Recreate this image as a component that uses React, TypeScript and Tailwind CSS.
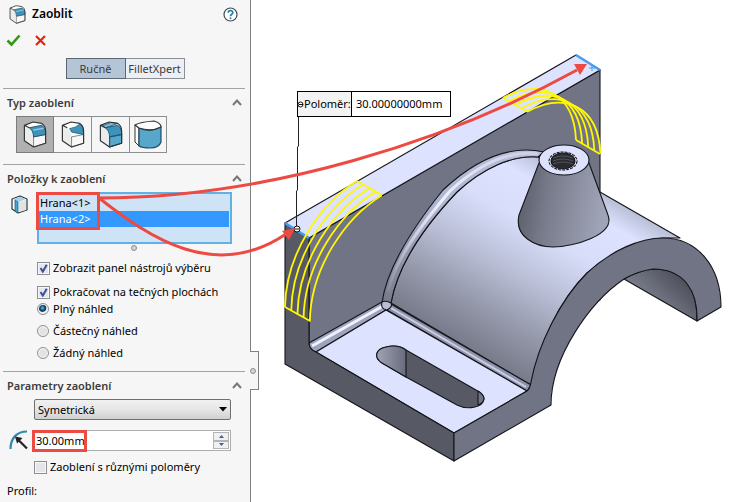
import { useState } from 'react';
import type { ReactNode } from 'react';

const edgeOutline = '#14141a';

function FilletIcon({ className = 'w-[24px] h-[27px]', kind = 'edge' }: { className?: string; kind?: string }) {
  const front = kind === 'full' ? '#58a6c9' : '#f8f8f8';
  return (
    <svg viewBox="0 0 24 28" className={className} aria-hidden="true">
      <path d="M1 4.500 L10 1 L19 2.500 Q23 5 23 10 V23 L10.500 27 L1 20.500 Z" fill="#fff" />
      <path d="M1 4.500 L6 7 Q10.500 10 10.500 16 V27 L1 20.500 Z" fill="#ececec" />
      <path d="M10.500 16.500 L23 14 V23 L10.500 27 Z" fill={front} stroke="#666" strokeWidth=".8" />
      {kind === 'full' && (
        <path d="M3 5 L12 1.500 L19 2.500 L6.500 7 Z" fill="#7dbddb" stroke="#1d5d7c" strokeWidth=".9" />
      )}
      {kind === 'variable' ? (
        <path d="M8.500 8 Q15 7 19.500 3 Q23 6 23 14 L10.500 11.500 Q10 9.500 8.500 8 Z" fill="#3f93bb" stroke="#1d5d7c" strokeWidth=".9" />
      ) : (
        <path d="M6 7 L19 4.500 Q23 7 23 11 V14 L10.500 16.500 Q10.500 10 6 7 Z" fill="#3f93bb" stroke="#1d4d66" strokeWidth=".9" />
      )}
      {kind === 'edge' && <path d="M10 9.500 L21 7.500" stroke="#8dcbe4" strokeWidth="1.4" />}
      {kind === 'full' && <path d="M10.500 16.500 L23 14 V23 L10.500 27 Z" fill="none" stroke="#1d5d7c" strokeWidth="1.2" />}
      <path d="M19 2.500 L10 1 L1 4.500 V20.500 L10.500 27 L23 23 V10 Q23 5 19 2.500 M1 4.500 L6 7" fill="none" stroke="#333" strokeWidth="1.2" strokeLinejoin="round" />
    </svg>
  );
}

function FullRoundIcon() {
  return (
    <svg viewBox="0 0 28 30" className="w-[28px] h-[30px]" aria-hidden="true">
      <path d="M1 5 L5 8 V26 L1 22 Z" fill="#fff" stroke="#333" />
      <path d="M5 8 Q16 13 27 7 V22 Q25 28 16 28 Q8 28 5 26 Z" fill="#58a6c9" stroke="#1d4d66" strokeWidth="1.2" />
      <path d="M1 5 Q6 2 20 1 Q27 3 27 7 Q17 12 5 8 Z" fill="#fff" stroke="#333" strokeWidth="1.2" />
    </svg>
  );
}

function FaceIcon() {
  return (
    <svg viewBox="0 0 17 19" className="w-[17px] h-[19px]" aria-hidden="true">
      <path d="M1 4 L9 1 L16 4 V15 L7 18 L1 14 Z" fill="#fff" stroke="#333" strokeWidth="1.2" strokeLinejoin="round" />
      <path d="M2 4 L9 2 L15 4 L8 7 Z" fill="#9fd3ea" />
      <path d="M8 7 L15 5 V15 L8 17 Z" fill="#e2e2e2" />
      <path d="M4 5 L7 7 V18 L4 16 Z" fill="#45a5d0" stroke="#1b6689" strokeWidth=".8" />
    </svg>
  );
}

function Section({ title, children }: { title: string; children: ReactNode }) {
  const [open, setOpen] = useState(true);
  return (
    <section className="ml-[3px] mr-[5px] border-t border-[#a3a3a3]">
      <h2>
        <button
          type="button"
          aria-expanded={open}
          onClick={() => setOpen(!open)}
          className="flex h-[27px] w-full items-center justify-between pl-1 pr-[3px] font-semibold text-[#3c3c3c]"
        >
          {title}
          <svg viewBox="0 0 10 7" className={open ? 'h-[7px] w-[10px]' : 'h-[7px] w-[10px] rotate-180'} aria-hidden="true">
            <path d="M1 6 L5 1.500 L9 6" fill="none" stroke="#777" strokeWidth="2" />
          </svg>
        </button>
      </h2>
      {open && children}
    </section>
  );
}

function Check({ label, checked = false }: { label: string; checked?: boolean }) {
  return (
    <label className="flex h-5 items-center gap-[3px]">
      <span className="grid size-[13px]">
        <input
          type="checkbox"
          defaultChecked={checked}
          className="peer size-[13px] appearance-none border border-[#8e8f8f] bg-[#e4e6ea] shadow-[inset_0_0_0_1px_#f8f8f8] [grid-area:1/1]"
        />
        <svg viewBox="0 0 13 13" className="invisible size-[13px] peer-checked:visible [grid-area:1/1] pointer-events-none" aria-hidden="true">
          <path d="M3.500 6 L5.800 9.500 L9.800 2.800" fill="none" stroke="#3b4f9c" strokeWidth="2" />
        </svg>
      </span>
      {label}
    </label>
  );
}

function Radio({ label, checked = false }: { label: string; checked?: boolean }) {
  return (
    <label className="flex h-[14px] items-center gap-1">
      <input
        type="radio"
        name="preview"
        defaultChecked={checked}
        className="size-3 appearance-none rounded-full border border-[#8e8f8f] bg-[#e3e3e3] shadow-[inset_0_0_0_1px_#f8f8f8] checked:bg-[radial-gradient(circle_at_45%_40%,#62c4ee_0,#135582_28%,#0c3552_42%,#eeeeee_52%)]"
      />
      {label}
    </label>
  );
}

function PropertyPanel() {
  return (
    <aside className="relative w-[251px] shrink-0 border-r border-[#808080] bg-[#f6f6f6]">
      <header className="flex h-7 items-center gap-[5px] pl-2 pr-3 text-[12px] font-semibold text-black">
        <FilletIcon className="h-[19px] w-[19px]" />
        <h1>Zaoblit</h1>
        <button type="button" aria-label="Nápověda" className="ml-auto">
          <svg viewBox="0 0 15 15" className="size-[15px]" aria-hidden="true">
            <circle cx="7.500" cy="7.500" r="6.500" fill="#fff" stroke="#3f4a52" strokeWidth="1.2" />
            <path d="M5.200 5.800 C5.200 2.800 10 2.900 9.800 5.600 C9.700 7.300 7.500 7.300 7.500 9.200" fill="none" stroke="#2980ad" strokeWidth="1.7" />
            <circle cx="7.500" cy="11.300" r="1" fill="#2980ad" />
          </svg>
        </button>
      </header>

      <div className="flex h-6 items-center gap-[14px] pl-[6px]">
        <button type="button" aria-label="OK">
          <svg viewBox="0 0 15 13" className="h-[13px] w-[15px]" aria-hidden="true">
            <path d="M1.500 6.500 L5.500 10.500 L13.500 1.500" fill="none" stroke="#2f9a12" strokeWidth="2.6" />
          </svg>
        </button>
        <button type="button" aria-label="Zrušit">
          <svg viewBox="0 0 11 11" className="size-[11px]" aria-hidden="true">
            <path d="M1 1 L10 10 M10 1 L1 10" stroke="#e02808" strokeWidth="2.2" />
          </svg>
        </button>
      </div>

      <div className="flex justify-center pb-[9px] pt-[6px] text-[#3a3a3a]">
        <button type="button" aria-pressed="true" className="h-[21px] w-[60px] border border-[#5d6772] bg-[#b5c5d8]">
          Ručně
        </button>
        <button type="button" aria-pressed="false" className="h-[21px] w-[59px] border border-l-0 border-[#8b8f94] bg-[#eceff3]">
          FilletXpert
        </button>
      </div>

      <Section title="Typ zaoblení">
        <div className="flex pb-[11px] pl-[13px]">
          <button type="button" aria-label="Konstantní poloměr" className="grid h-[37px] w-[38px] place-items-center border border-[#7c7c7c] bg-[#b0b0b0]">
            <FilletIcon />
          </button>
          <button type="button" aria-label="Proměnný poloměr" className="grid h-[37px] w-[38px] place-items-center border border-l-0 border-[#8e8e8e]">
            <FilletIcon kind="variable" />
          </button>
          <button type="button" aria-label="Zaoblení ploch" className="grid h-[37px] w-[38px] place-items-center border border-l-0 border-[#8e8e8e]">
            <FilletIcon kind="full" />
          </button>
          <button type="button" aria-label="Plné zaoblení" className="grid h-[37px] w-[37px] place-items-center border border-l-0 border-[#8e8e8e]">
            <FullRoundIcon />
          </button>
        </div>
      </Section>

      <Section title="Položky k zaoblení">
        <div className="flex gap-[9px] pl-2 pr-[13px]">
          <div className="pt-[3px]">
            <FaceIcon />
          </div>
          <ul role="listbox" aria-label="Položky k zaoblení" className="h-[52px] flex-1 border-2 border-[#62b1e5] bg-[#cfe3f7] pr-px pt-px leading-4">
            <li role="option" aria-selected="false" className="pl-px">Hrana&lt;1&gt;</li>
            <li role="option" aria-selected="true" className="bg-[#3399ff] pl-px text-white">Hrana&lt;2&gt;</li>
          </ul>
        </div>
        <div className="flex h-[14px] justify-center pl-[19px] pt-px">
          <span className="size-[6px] rounded-full border border-[#8c8c8c] bg-[#d4d4d4]" />
        </div>
        <div className="flex flex-col gap-1 pl-[34px]">
          <Check label="Zobrazit panel nástrojů výběru" checked />
          <Check label="Pokračovat na tečných plochách" checked />
        </div>
        <div className="flex flex-col gap-2 pb-[11px] pl-[34px]">
          <Radio label="Plný náhled" checked />
          <Radio label="Částečný náhled" />
          <Radio label="Žádný náhled" />
        </div>
      </Section>

      <Section title="Parametry zaoblení">
        <div className="grid pl-[31px] pr-[14px]">
          <select
            aria-label="Symetrie"
            className="h-[21px] w-full appearance-none rounded-[2px] border border-[#707070] bg-linear-to-b from-[#f1f1f1] via-[#e6e6e6] to-[#d0d0d0] pl-[3px] [grid-area:1/1]"
          >
            <option>Symetrická</option>
            <option>Asymetrická</option>
          </select>
          <svg viewBox="0 0 8 5" className="mr-1 h-[5px] w-2 place-self-center justify-self-end [grid-area:1/1] pointer-events-none" aria-hidden="true">
            <path d="M0 0 H8 L4 4.500 Z" fill="#000" />
          </svg>
        </div>
        <div className="flex gap-1 pb-[6px] pl-[6px] pr-[14px] pt-[10px]">
          <svg viewBox="0 0 20 21" className="h-[21px] w-[20px] shrink-0" aria-hidden="true">
            <path d="M1.500 19 C1.500 8 8 1.500 18 1.500" fill="none" stroke="#3389ab" strokeWidth="2.2" />
            <path d="M18 18.500 L9 9.500" stroke="#222" strokeWidth="2.2" />
            <path d="M6 6.500 L13.500 8 L8 13.500 Z" fill="#222" />
          </svg>
          <div className="flex h-[21px] flex-1 border border-[#abadb3] bg-white">
            <input type="text" aria-label="Poloměr" defaultValue="30.00mm" className="w-0 flex-1 bg-transparent pl-[2px] outline-none" />
            <div className="flex w-[17px] flex-col py-px pr-px">
              <button type="button" aria-label="Zvýšit" className="grid flex-1 place-items-center border border-[#b4b4b4] bg-[#f0f0f0]">
                <svg viewBox="0 0 5 3" className="h-[3px] w-[5px]" aria-hidden="true"><path d="M0 3 L2.500 0 L5 3 Z" fill="#4a5c9c" /></svg>
              </button>
              <button type="button" aria-label="Snížit" className="grid flex-1 place-items-center border border-[#b4b4b4] bg-[#f0f0f0]">
                <svg viewBox="0 0 5 3" className="h-[3px] w-[5px]" aria-hidden="true"><path d="M0 0 L2.500 3 L5 0 Z" fill="#4a5c9c" /></svg>
              </button>
            </div>
          </div>
        </div>
        <div className="pl-[31px]">
          <Check label="Zaoblení s různými poloměry" />
        </div>
        <p className="mt-1 h-5 pl-1 leading-5">Profil:</p>
      </Section>

      {/* splitter handle hanging off the right border */}
      <div className="absolute left-[250px] top-[351px] flex h-[39px] w-[9px] items-center border border-l-0 border-[#808080] bg-[#f6f6f6]">
        <span className="size-[6px] rounded-full border border-[#8c8c8c] bg-[#d4d4d4]" />
      </div>
    </aside>
  );
}

function Bracket() {
  const steps = [0, 1, 2, 3, 4];
  return (
    <svg viewBox="251 0 499 502" className="h-[502px] w-[499px]" role="img" aria-label="Model držáku">
      <defs>
        <linearGradient id="cyl" gradientUnits="userSpaceOnUse" x1="460" y1="344" x2="561" y2="169">
          <stop offset="0" stopColor="#777a89" />
          <stop offset=".2" stopColor="#9397a9" />
          <stop offset=".45" stopColor="#bbc0d8" />
          <stop offset=".68" stopColor="#d8defa" />
          <stop offset=".88" stopColor="#dde3ff" />
          <stop offset="1" stopColor="#b9bed6" />
        </linearGradient>
        <linearGradient id="cone" x1="0" x2="1" y1="0" y2=".15">
          <stop offset="0" stopColor="#565965" />
          <stop offset=".35" stopColor="#757988" />
          <stop offset="1" stopColor="#a0a4b8" />
        </linearGradient>
        <linearGradient id="arch" gradientUnits="userSpaceOnUse" x1="390" y1="305" x2="530" y2="150">
          <stop offset="0" stopColor="#777a8a" />
          <stop offset=".5" stopColor="#b0b5d0" />
          <stop offset="1" stopColor="#b8bdd8" />
        </linearGradient>
        <linearGradient id="archLight" gradientUnits="userSpaceOnUse" x1="390" y1="305" x2="530" y2="150">
          <stop offset="0" stopColor="#e8ecff" stopOpacity="0" />
          <stop offset=".55" stopColor="#eef1ff" />
          <stop offset="1" stopColor="#e8ecff" stopOpacity=".4" />
        </linearGradient>
        <linearGradient id="under" gradientUnits="userSpaceOnUse" x1="640" y1="300" x2="676" y2="262">
          <stop offset="0" stopColor="#7f8392" />
          <stop offset="1" stopColor="#464852" />
        </linearGradient>
        <linearGradient id="slot" x1="0" x2="1">
          <stop offset="0" stopColor="#a0a4b7" />
          <stop offset="1" stopColor="#686b7a" />
        </linearGradient>
      </defs>

      <g stroke={edgeOutline} strokeWidth="1.1" strokeLinejoin="round">
        {/* upright wall */}
        <path d="M309 238 L600 70 V300 L400 330 L309 343 Z" fill="#717484" />
        <path d="M285 223 L576 55 L600 70 L309 238 Z" fill="#dde3fe" />

        {/* half cylinder with its fillet */}
        <path
          d="M391 303 C397 269 417 234 457 192 C483 168 512 155 538 157 L600 192 L680 238 L663 238 C640 239 612 255 587 273 C560 300 538 345 531 385 Z"
          fill="url(#cyl)"
        />
        <path
          d="M382 303 C386 272 406 236 443 190 C475 160 508 144 544 152 L538 157 C512 155 483 168 457 192 C417 234 397 269 391 303 Z"
          fill="url(#arch)"
        />
        <path d="M388 292 C394 264 415 232 450 191 C479 164 508 150 538 154" fill="none" stroke="url(#archLight)" strokeWidth="3" />

        {/* base plate */}
        <path d="M309 343 L382 302 L386 310 L316 352 Q309 350 309 343 Z" fill="#9ea3bb" />
        <path d="M312 346 L383 306" stroke="#eef1ff" strokeWidth="3" />
        <path d="M391 304 L531 385 L527 391 L387 310 Z" fill="#8f93aa" />
        <path d="M391 308 L526 387" stroke="#c9cfe8" strokeWidth="2" />
        <path d="M316 352 L386 310 L527 391 L454 433 Z" fill="#dde3fe" />
        <path d="M382 302 Q380 309 387 310 Q393 307 391 303 Q386 300 382 302 Z" fill="#b9bed6" />
        <path d="M285 223 L309 238 V343 Q309 349 316 352 L454 433 V461 L285 364 Z" fill="#575964" />

        {/* front profile */}
        <path d="M624 279 L697 321 C697 297 692 269 653 269 Q638 271 624 279 Z" fill="url(#under)" />
        <path
          d="M454 433 L527 391 Q530 389 531 382 C538 345 560 300 587 273 C612 250 640 238 663 238 C697 238 721 266 721 307 L697 321 C698 291 684 269 653 269 Q638 271 624 279 C590 302 551 357 551 405 L454 461 Z"
          fill="#717484"
        />

        {/* slot */}
        <path
          d="M406 350 L476 390 Q484 394 484 399 C483 408 467 410 457 405 L406 377 L382 363 C373 357 376 349 386 347 Q398 344 406 350 Z"
          fill="#575964"
        />
        <path d="M406 350 V377 L382 363 C373 357 376 349 386 347 Q398 344 406 350 Z" fill="url(#slot)" />
        <path d="M478 391 V405 Q484 403 484 398 Q483 394 478 391 Z" fill="#717484" />

        {/* boss */}
        <path d="M539 163 L519 215 C514 237 536 247 553 247 C573 247 616 235 608 215 L589 163 Z" fill="url(#cone)" />
        <ellipse cx="564" cy="160" rx="25" ry="15" fill="#dde3fe" />
        <ellipse cx="563" cy="161" rx="14" ry="9" fill="#fff" strokeDasharray="3 1" />
        <ellipse cx="563" cy="161" rx="12" ry="8" fill="#2a2b30" />
        <path d="M553 158 Q563 154 573 158 M553 161 Q563 157 573 161 M553 164 Q563 160 573 164" fill="none" stroke="#5c5e68" strokeWidth=".8" />
      </g>

      {/* selected edges */}
      <path d="M285 223 L309 238 M576 55 L600 70" stroke="#479df0" strokeWidth="2.4" />
      <path d="M589 68 H595 M592 65 V71" stroke="#479df0" strokeWidth="1" />

      {/* fillet preview */}
      <g fill="none" stroke="#fff800" strokeWidth="1.8">
        {steps.map((i) => (
          <g key={i}>
            <path d="M285 307 C286 252 322 202 357 181" transform={`translate(${i * 6.2} ${i * 3.6})`} />
            <path d="M503 98 C540 78 574 92 576 140" transform={`translate(${i * 6.1} ${i * 3.4})`} />
          </g>
        ))}
        <path d="M285 307 L310 321 M357 181 L382 195 M503 98 L528 112 M576 140 L600 154" />
      </g>

      {/* callout leader */}
      <path d="M298.500 117 V146 L297.500 147 V190 L296.500 191 V229" fill="none" stroke="#222" />
      <circle cx="297" cy="229" r="3" fill="#fff" stroke="#111" />
      <path d="M295 229 H299" stroke="#111" />
    </svg>
  );
}

function Annotations() {
  return (
    <svg viewBox="0 0 750 502" className="pointer-events-none absolute left-0 top-0 h-[502px] w-[750px]" aria-hidden="true">
      <g fill="none" stroke="#ec4a43" strokeWidth="3">
        <rect x="37.500" y="193.500" width="61" height="35" />
        <rect x="33.500" y="431.500" width="52" height="19" />
        <path d="M99 198 C270 198 450 140 577 70" />
        <path d="M99 198 C150 238 215 282 286 234" />
      </g>
      <path d="M587 64 L574 64 L580 75 Z M295 228 L282 231 L289 240 Z" fill="#ec4a43" />
    </svg>
  );
}

export default function App() {
  return (
    <div className="relative flex min-h-screen overflow-hidden bg-white font-['Noto_Sans','Open_Sans',sans-serif] text-[11px] leading-4 text-black">
      <PropertyPanel />
      <main className="relative flex-1 overflow-hidden">
        <Bracket />
        <div className="absolute left-[46px] top-[91px] flex h-[26px] w-[154px] items-stretch border border-black bg-white">
          <label htmlFor="radius" className="flex w-[54px] items-center border-r border-black bg-[#f3f3f3]">
            <svg viewBox="0 0 7 7" className="-ml-px size-[7px] shrink-0" aria-hidden="true">
              <circle cx="3.500" cy="3.500" r="2.500" fill="#fff" stroke="#111" />
              <path d="M2 3.500 H6" stroke="#111" />
            </svg>
            Poloměr:
          </label>
          <input id="radius" type="text" defaultValue="30.00000000mm" className="w-0 flex-1 pl-1 outline-none" />
        </div>
      </main>
      <Annotations />
    </div>
  );
}
